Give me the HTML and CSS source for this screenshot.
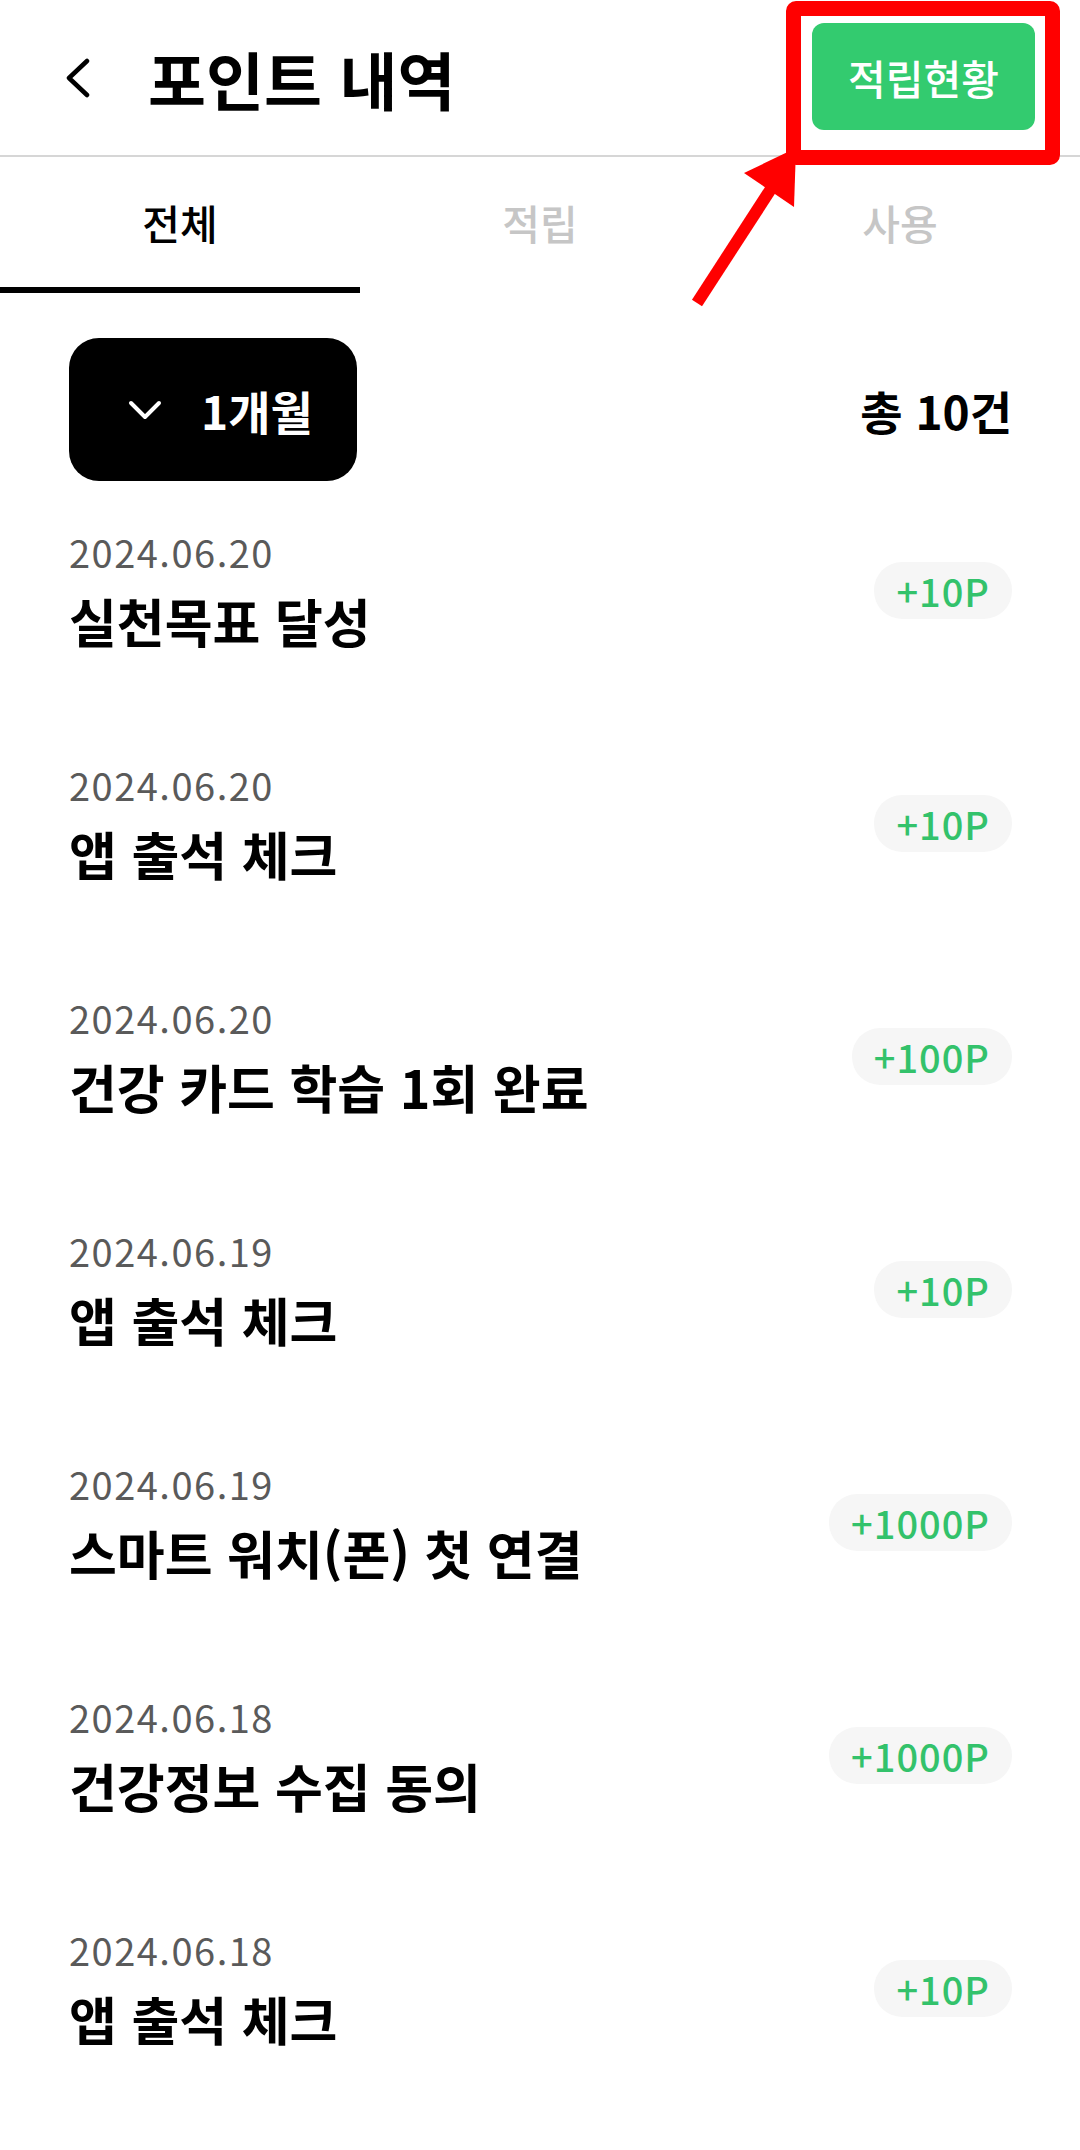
FILE: index.html
```html
<!DOCTYPE html>
<html lang="ko">
<head>
<meta charset="UTF-8">
<meta name="viewport" content="width=device-width, initial-scale=1.0">
<title>포인트 내역</title>
<link rel="stylesheet" href="styles.css">
</head>
<body>

    <div class="header">
        <a class="back" href="#">
            <svg width="26" height="40" viewBox="0 0 26 40">
                <polyline points="22,3 4,20 22,37" fill="none" stroke="#000" stroke-width="4.5" stroke-linecap="round" stroke-linejoin="round"/>
            </svg>
        </a>
        <h1 class="title">포인트 내역</h1>
        <button class="status-button">적립현황</button>
    </div>

    <div class="tabs">
        <div class="tab active">전체</div>
        <div class="tab">적립</div>
        <div class="tab">사용</div>
    </div>

    <div class="toolbar">
        <button class="period-button">
            <svg width="36" height="22" viewBox="0 0 36 22">
                <polyline points="4,4 18,18 32,4" fill="none" stroke="#fff" stroke-width="4" stroke-linecap="round" stroke-linejoin="round"/>
            </svg>
            <span>1개월</span>
        </button>
        <div class="count">총 10건</div>
    </div>

    <div class="list">
        <div class="entry">
            <div class="entry-text">
                <div class="date">2024.06.20</div>
                <div class="name">실천목표 달성</div>
            </div>
            <div class="points">+10P</div>
        </div>
        <div class="entry">
            <div class="entry-text">
                <div class="date">2024.06.20</div>
                <div class="name">앱 출석 체크</div>
            </div>
            <div class="points">+10P</div>
        </div>
        <div class="entry">
            <div class="entry-text">
                <div class="date">2024.06.20</div>
                <div class="name">건강 카드 학습 1회 완료</div>
            </div>
            <div class="points">+100P</div>
        </div>
        <div class="entry">
            <div class="entry-text">
                <div class="date">2024.06.19</div>
                <div class="name">앱 출석 체크</div>
            </div>
            <div class="points">+10P</div>
        </div>
        <div class="entry">
            <div class="entry-text">
                <div class="date">2024.06.19</div>
                <div class="name">스마트 워치(폰) 첫 연결</div>
            </div>
            <div class="points">+1000P</div>
        </div>
        <div class="entry">
            <div class="entry-text">
                <div class="date">2024.06.18</div>
                <div class="name">건강정보 수집 동의</div>
            </div>
            <div class="points">+1000P</div>
        </div>
        <div class="entry">
            <div class="entry-text">
                <div class="date">2024.06.18</div>
                <div class="name">앱 출석 체크</div>
            </div>
            <div class="points">+10P</div>
        </div>
    </div>

    <!-- annotation drawn over the screenshot -->
    <div class="mark-box"></div>
    <svg class="mark-arrow" width="1080" height="320" viewBox="0 0 1080 320">
        <line x1="697" y1="303" x2="778" y2="178" stroke="#ff0000" stroke-width="12"/>
        <polygon points="796,148 744,173 794,207" fill="#ff0000"/>
    </svg>

</body>
</html>
```

FILE: styles.css
```css
body {
    margin: 0;
    width: 1080px;
    background: #fff;
    color: #000;
    font-family: "Noto Sans CJK KR", "Noto Sans", sans-serif;
    position: relative;
}

.header {
    display: flex;
    align-items: center;
    height: 157px;
    box-sizing: border-box;
    padding: 0 45px 0 65px;
    border-bottom: 2px solid #d6d6d6;
}

.back {
    display: flex;
    width: 26px;
    margin-right: 57px;
}

.title {
    margin: 0;
    font-size: 63px;
    font-weight: 700;
    letter-spacing: 0;
}

.status-button {
    margin-left: auto;
    width: 223px;
    height: 107px;
    border: none;
    border-radius: 12px;
    background-color: #33cb6f;
    color: #fff;
    font-family: inherit;
    font-size: 41px;
    font-weight: 500;
    margin-bottom: 2px;
}

.tabs {
    display: grid;
    grid-template-columns: 1fr 1fr 1fr;
    height: 136px;
}

.tab {
    display: flex;
    align-items: center;
    justify-content: center;
    font-size: 41px;
    font-weight: 500;
    color: #c6c6c6;
    border-bottom: 6px solid transparent;
}

.tab.active {
    color: #000;
    border-bottom-color: #000;
}

.toolbar {
    display: flex;
    align-items: center;
    justify-content: space-between;
    margin-top: 45px;
    padding: 0 68px 0 69px;
}

.period-button {
    display: flex;
    align-items: center;
    gap: 38px;
    width: 288px;
    height: 143px;
    padding: 0 0 0 58px;
    border: none;
    border-radius: 30px;
    background-color: #000;
    color: #fff;
    font-family: inherit;
    font-size: 46px;
    font-weight: 700;
}

.count {
    font-size: 46px;
    font-weight: 700;
}

.list {
    display: flex;
    flex-direction: column;
    gap: 110px;
    padding: 48px 68px 0 69px;
}

.entry {
    display: flex;
    align-items: center;
    justify-content: space-between;
}

.date {
    font-size: 38px;
    line-height: 46px;
    color: #5a5a5a;
    letter-spacing: 1.5px;
}

.name {
    margin-top: 15px;
    font-size: 52px;
    line-height: 62px;
    font-weight: 700;
}

.points {
    height: 57px;
    line-height: 57px;
    padding: 0 22px;
    border-radius: 28px;
    background-color: #f6f6f6;
    color: #33c26b;
    font-size: 38px;
    font-weight: 500;
    letter-spacing: 1px;
}

.mark-box {
    position: absolute;
    left: 786px;
    top: 1px;
    width: 274px;
    height: 164px;
    box-sizing: border-box;
    border: 15px solid #ff0000;
    border-radius: 10px;
}

.mark-arrow {
    position: absolute;
    left: 0;
    top: 0;
    pointer-events: none;
}
```
